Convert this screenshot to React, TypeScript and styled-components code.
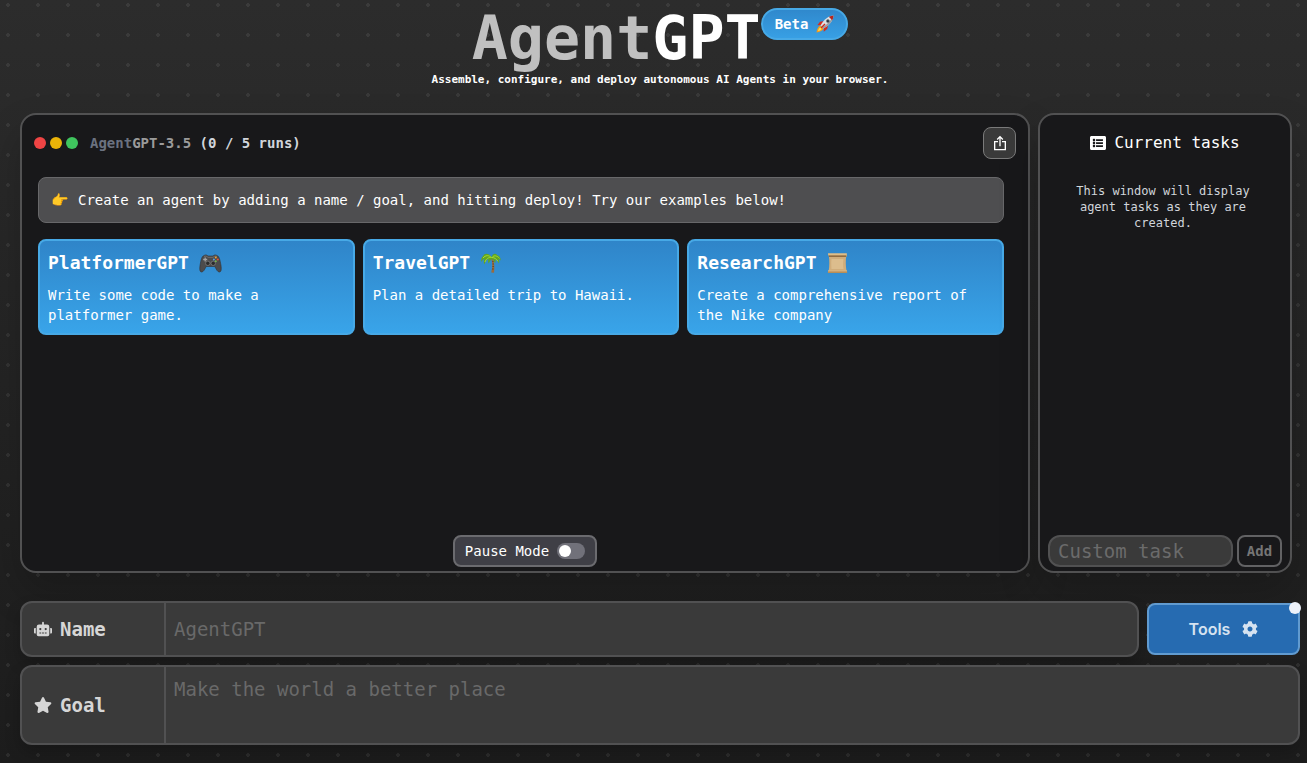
import React from "react";
import styled, { createGlobalStyle } from "styled-components";
import { FaCog, FaListAlt, FaRobot, FaStar } from "react-icons/fa";
import { CgExport } from "react-icons/cg";

const MONO = `"DejaVu Sans Mono", "Liberation Mono", monospace`;
const LINE = "#515152";
const FIELD = "#3a3a3a";

const GlobalStyle = createGlobalStyle`
  *, *::before, *::after { box-sizing: border-box; }
  body {
    margin: 0;
    color: #fff;
    font: 14px/20px ${MONO};
    background-color: #1c1c1c;
  }
  h1, h2, h3, p { margin: 0; font: inherit; }
  button, input, textarea { font: inherit; color: inherit; margin: 0; }
  svg { display: block; flex: none; }
`;

const Page = styled.div`
  min-height: 100vh;
  display: flex;
  flex-direction: column;
  padding: 8px 7px 18px 20px;
  background-image:
    radial-gradient(circle at 15px 15px, rgba(255, 255, 255, 0.07) 0, rgba(255, 255, 255, 0.07) 2px, transparent 2px),
    linear-gradient(#2c2c2c, #1c1c1c);
  background-size: 30px 30px, 100% 100%;
  background-position: -7px -10px, 0 0;
`;

const Header = styled.header`
  display: flex;
  flex-direction: column;
  align-items: center;
`;

const Brand = styled.div`
  display: flex;
  align-items: flex-start;
`;

const Title = styled.h1`
  font-size: 60px;
  line-height: 60px;
  font-weight: 700;
`;

const Muted = styled.span<{ $color: string }>`
  color: ${(p) => p.$color};
`;

const Badge = styled.span`
  display: flex;
  align-items: center;
  gap: 8px;
  height: 32px;
  padding: 0 12px;
  font-weight: 700;
  border: 2px solid #47a9e6;
  border-radius: 16px;
  background: linear-gradient(#2f87cb, #38a1e6) border-box;
`;

const Tagline = styled.p`
  padding: 3px 0 25px;
  font-size: 11px;
  line-height: 17px;
  font-weight: 700;
`;

const Workspace = styled.main`
  flex: 1;
  display: flex;
  gap: 8px;
  margin-right: 8px;
`;

const Panel = styled.section`
  display: flex;
  flex-direction: column;
  border: 2px solid ${LINE};
  border-radius: 16px;
  background: #18181a;
  box-shadow: 0 20px 40px rgba(0, 0, 0, 0.2);
`;

const ChatPanel = styled(Panel)`
  flex: 1;
  min-width: 0;
  padding: 12px;
`;

const TaskPanel = styled(Panel)`
  width: 254px;
  flex: none;
  align-items: center;
  padding: 16px 8px 4px;
`;

const ChatHeader = styled.div`
  display: flex;
  align-items: center;
  gap: 4px;
  height: 32px;
  font-weight: 700;
`;

const Light = styled.span<{ $color: string }>`
  width: 12px;
  height: 12px;
  border-radius: 50%;
  background: ${(p) => p.$color};
`;

const RunTitle = styled.h2`
  flex: 1;
  margin-left: 8px;
  color: #d1d5db;
`;

const ExportButton = styled.button`
  display: flex;
  align-items: center;
  justify-content: center;
  width: 33px;
  height: 32px;
  padding: 0;
  border: 1px solid #7a7a7a;
  border-radius: 8px;
  background: ${FIELD};
`;

const Messages = styled.div`
  flex: 1;
  display: flex;
  flex-direction: column;
  gap: 16px;
  padding: 18px 12px 0 4px;
`;

const Notice = styled.p`
  display: flex;
  align-items: center;
  gap: 10px;
  min-height: 46px;
  padding: 8px 12px;
  border: 1px solid #68686a;
  border-radius: 8px;
  background: #4e4e50;
`;

const Examples = styled.div`
  display: grid;
  grid-template-columns: repeat(3, 1fr);
  gap: 8px;
`;

const Example = styled.button`
  display: flex;
  flex-direction: column;
  gap: 8px;
  min-height: 96px;
  padding: 8px;
  text-align: left;
  border: 2px solid #47a9e6;
  border-radius: 8px;
  background: linear-gradient(#2f84c8, #39a5ea) border-box;
`;

const ExampleTitle = styled.span`
  display: flex;
  align-items: center;
  gap: 10px;
  font-size: 18px;
  line-height: 28px;
  font-weight: 700;
`;

const PauseToggle = styled.label`
  align-self: center;
  display: flex;
  align-items: center;
  gap: 8px;
  height: 32px;
  margin-bottom: -8px;
  padding: 0 10px;
  border: 2px solid #6b6b6f;
  border-radius: 8px;
  background: #3f3f46;
`;

const Switch = styled.input`
  appearance: none;
  width: 28px;
  height: 16px;
  margin: 0;
  padding: 2px;
  border-radius: 8px;
  background: #71717a;
  &::before {
    content: "";
    display: block;
    width: 12px;
    height: 12px;
    border-radius: 50%;
    background: #fff;
  }
  &:checked::before { margin-left: 12px; }
`;

const TaskTitle = styled.h2`
  display: flex;
  align-items: center;
  gap: 8px;
  font-size: 16px;
  line-height: 24px;
`;

const TaskHint = styled.p`
  flex: 1;
  padding: 28px 24px 0 20px;
  font-size: 12px;
  line-height: 16px;
  text-align: center;
  color: #d1d5db;
`;

const TaskForm = styled.form`
  display: flex;
  gap: 4px;
  align-self: stretch;
`;

const TaskInput = styled.input`
  flex: 1;
  min-width: 0;
  height: 32px;
  padding: 0 8px;
  font-size: 19px;
  border: 2px solid ${LINE};
  border-radius: 12px;
  background: ${FIELD};
  &::placeholder { color: #6b6b6b; opacity: 1; }
`;

const AddButton = styled.button`
  width: 45px;
  height: 32px;
  padding: 0;
  font-weight: 700;
  color: #757575;
  border: 2px solid #626264;
  border-radius: 8px;
  background: transparent;
`;

const Settings = styled.form`
  display: flex;
  flex-direction: column;
  gap: 8px;
  margin-top: 28px;
`;

const NameRow = styled.div`
  display: flex;
  align-items: center;
  gap: 8px;
`;

const Field = styled.div<{ $height: number }>`
  flex: 1;
  display: flex;
  min-height: ${(p) => p.$height}px;
  border: 2px solid ${LINE};
  border-radius: 12px;
  background: ${FIELD};
  box-shadow: 0 8px 16px rgba(0, 0, 0, 0.2);
`;

const FieldLabel = styled.label`
  display: flex;
  align-items: center;
  gap: 8px;
  width: 144px;
  padding-left: 12px;
  font-size: 19px;
  font-weight: 700;
  color: #d6d6d6;
  border-right: 2px solid ${LINE};
`;

const FieldInput = styled.input`
  flex: 1;
  min-width: 0;
  padding: 0 8px;
  font-size: 19px;
  border: 0;
  background: transparent;
  &::placeholder { color: #696969; opacity: 1; }
`;

const FieldArea = styled(FieldInput).attrs({ as: "textarea" })`
  padding: 8px;
  line-height: 28px;
  resize: none;
`;

const ToolsButton = styled.button`
  position: relative;
  display: flex;
  align-items: center;
  justify-content: center;
  gap: 12px;
  width: 153px;
  height: 52px;
  font-family: Inter, sans-serif;
  font-size: 16px;
  font-weight: 600;
  color: #d5e2f0;
  border: 2px solid #619bd0;
  border-radius: 8px;
  background: #266bb1;
`;

const Dot = styled.span`
  position: absolute;
  top: -3px;
  right: -3px;
  width: 12px;
  height: 12px;
  border-radius: 50%;
  background: #edf2fa;
`;

const Gamepad = () => (
  <svg width="23" height="22" viewBox="0 0 23 22" aria-hidden="true">
    <path
      d="M5 3.5C6.500 2.400 8 3 9 4h5c1-1 2.500-1.600 4-.5 2.300.8 3 4.500 3.900 9.500.7 4.500.3 7-1.500 7-2 0-3-2.600-4.600-5.500H7.200C5.600 17.400 4.600 20 2.600 20 .8 20 .4 17.500 1.100 13 2 8 2.700 4.300 5 3.500z"
      fill="#4c4b4c"
      stroke="#323132"
      strokeWidth="0.6"
    />
    <path d="M5 4.500c2-1 3 .3 4 .8h5c1-.5 2-1.800 4-.8" fill="none" stroke="#777" strokeWidth="0.8" />
    <path d="M6.200 5.500v4M4.200 7.500h4" stroke="#a3a3a3" strokeWidth="1.300" />
    <circle cx="8.800" cy="11.300" r="2.200" fill="#2b2b2b" stroke="#858585" strokeWidth="0.7" />
    <circle cx="14.200" cy="11.300" r="2.200" fill="#2b2b2b" stroke="#858585" strokeWidth="0.7" />
    <circle cx="16.800" cy="5.400" r="1" fill="#f0a030" />
    <circle cx="18.800" cy="7.400" r="1" fill="#e8523a" />
    <circle cx="14.900" cy="7.400" r="1" fill="#5a9ce0" />
    <circle cx="16.800" cy="9.300" r="1" fill="#79b84d" />
  </svg>
);

const Palm = () => (
  <svg width="22" height="22" viewBox="0 0 22 22" aria-hidden="true">
    <path d="M11 6c1.500 4 1.800 9 .2 14.500l2.800.3C14.800 15 14.300 10 12.600 6z" fill="#9b6b3d" />
    <path d="M12.300 9.500h1.300M12.500 12h1.400M12.400 14.500h1.500M12 17h1.700" stroke="#5f3d20" strokeWidth="0.8" />
    <path
      d="M11.500 5C9 1 4.500.8 3 4.200 1.500 5 1 7.500 1.300 10c1-2 2-2.800 3-3C3.500 9 3.600 11 4.400 12.400 5 10 6.500 7.800 8.500 7c-.6 2-.4 3.400.3 4.600C9.500 9.500 10.500 8 11.800 7c1.600 1 2.700 2.400 3.200 4.300.7-1.200.7-2.600.2-4 1.900 1 3 2.300 3.700 4.200.6-1.500.3-3.200-.5-4.600 1 .3 1.800.9 2.300 1.600C20.600 5 19 3.500 17.300 3.200 15.500.8 12.800 1.500 11.500 5z"
      fill="#62a51f"
    />
    <path
      d="M11.500 5.500C9 3 5.500 3 3 6M11.500 5.500C8.500 5 6 7 5 10M12 5.500c2-2.500 5-2 7.500.8M12 5.500c2.500 0 4.500 1.500 6 3.800"
      fill="none"
      stroke="#a4d838"
      strokeWidth="1"
    />
  </svg>
);

const Scroll = () => (
  <svg width="21" height="22" viewBox="0 0 21 22" aria-hidden="true">
    <path d="M1.800 3.500h17.500c-.8 5-.6 10.500.2 15.500H1.700c.8-5 .9-10.500.1-15.500z" fill="#d0ad7b" />
    <path d="M4.500 7c-.4 4-.2 7 0 10h12c-.6-4-.5-7 0-10z" fill="#dcbd8d" />
    <path d="M1 1.300h18.800v3.200H2C1.300 3.700 1 2.500 1 1.300z" fill="#dfbd86" />
    <path d="M1.500 3.500h17.800v1.300H2z" fill="#78542c" />
    <path d="M1 18.500h19l.2 2.500H.9z" fill="#b88e57" />
    <path d="M1 18.500h19v.8H1z" fill="#e6c797" />
  </svg>
);

const Rocket = () => (
  <svg width="18" height="18" viewBox="0 0 18 18" aria-hidden="true">
    <path d="M4.500 10.500C2.500 11 .8 14 .5 17.500 4 17 7 15.500 7.500 13.500z" fill="#f39a1f" />
    <path d="M4.300 12.300c-1 .6-2 2.300-2.300 3.800 1.600-.3 3.300-1.300 3.900-2.300z" fill="#ffe04a" />
    <path d="M8 6 4 6.800 1.300 10.300 5.500 10zM12 10l-.8 4L7.700 16.700 8 12.500z" fill="#d52b1e" />
    <path d="M17.500.5C13 .8 8 4 4.500 10.500l3 3C14 10 17.200 5 17.500.5z" fill="#dcdfe2" />
    <path d="M17.500.5C17.200 5 14 10 7.500 13.500L6.300 12.300C12 9 15.500 5 17.500.5z" fill="#969ba2" />
    <path d="M17.500.5c-1.700.1-3.200.5-4.700 1.300l3.400 3.400C17 3.700 17.400 2.200 17.500.5z" fill="#b3271e" />
    <circle cx="11.900" cy="6.100" r="1.500" fill="#29333e" stroke="#72777d" strokeWidth="0.7" />
    <path d="m5 13 4-4" stroke="#c92c20" strokeWidth="1.400" />
  </svg>
);

const EXAMPLES = [
  { name: "PlatformerGPT", icon: <Gamepad />, text: "Write some code to make a platformer game." },
  { name: "TravelGPT", icon: <Palm />, text: "Plan a detailed trip to Hawaii." },
  { name: "ResearchGPT", icon: <Scroll />, text: "Create a comprehensive report of the Nike company" },
];

export default function App() {
  return (
    <Page>
      <GlobalStyle />
      <Header>
        <Brand>
          <Title>
            <Muted $color="#c0c0c0">Agent</Muted>GPT
          </Title>
          <Badge>
            Beta <Rocket />
          </Badge>
        </Brand>
        <Tagline>Assemble, configure, and deploy autonomous AI Agents in your browser.</Tagline>
      </Header>

      <Workspace>
        <ChatPanel>
          <ChatHeader>
            <Light $color="#ef4444" />
            <Light $color="#eab308" />
            <Light $color="#3fc55e" />
            <RunTitle>
              <Muted $color="#6b7280">Agent</Muted>
              <Muted $color="#9b9b9b">GPT-3.5</Muted> (0 / 5 runs)
            </RunTitle>
            <ExportButton aria-label="Export" type="button">
              <CgExport size={16} />
            </ExportButton>
          </ChatHeader>
          <Messages>
            <Notice>
              <span>👉</span>
              Create an agent by adding a name / goal, and hitting deploy! Try our examples below!
            </Notice>
            <Examples>
              {EXAMPLES.map((e) => (
                <Example key={e.name} type="button">
                  <ExampleTitle>
                    {e.name} {e.icon}
                  </ExampleTitle>
                  <span>{e.text}</span>
                </Example>
              ))}
            </Examples>
          </Messages>
          <PauseToggle>
            Pause Mode
            <Switch type="checkbox" role="switch" />
          </PauseToggle>
        </ChatPanel>

        <TaskPanel>
          <TaskTitle>
            <FaListAlt size={16} /> Current tasks
          </TaskTitle>
          <TaskHint>This window will display agent tasks as they are created.</TaskHint>
          <TaskForm>
            <TaskInput aria-label="Custom task" placeholder="Custom task" />
            <AddButton type="button">Add</AddButton>
          </TaskForm>
        </TaskPanel>
      </Workspace>

      <Settings>
        <NameRow>
          <Field $height={56}>
            <FieldLabel htmlFor="name">
              <FaRobot size={18} /> Name
            </FieldLabel>
            <FieldInput id="name" placeholder="AgentGPT" />
          </Field>
          <ToolsButton type="button">
            Tools <FaCog size={16} />
            <Dot />
          </ToolsButton>
        </NameRow>
        <Field $height={80}>
          <FieldLabel htmlFor="goal">
            <FaStar size={18} /> Goal
          </FieldLabel>
          <FieldArea id="goal" placeholder="Make the world a better place" />
        </Field>
      </Settings>
    </Page>
  );
}
